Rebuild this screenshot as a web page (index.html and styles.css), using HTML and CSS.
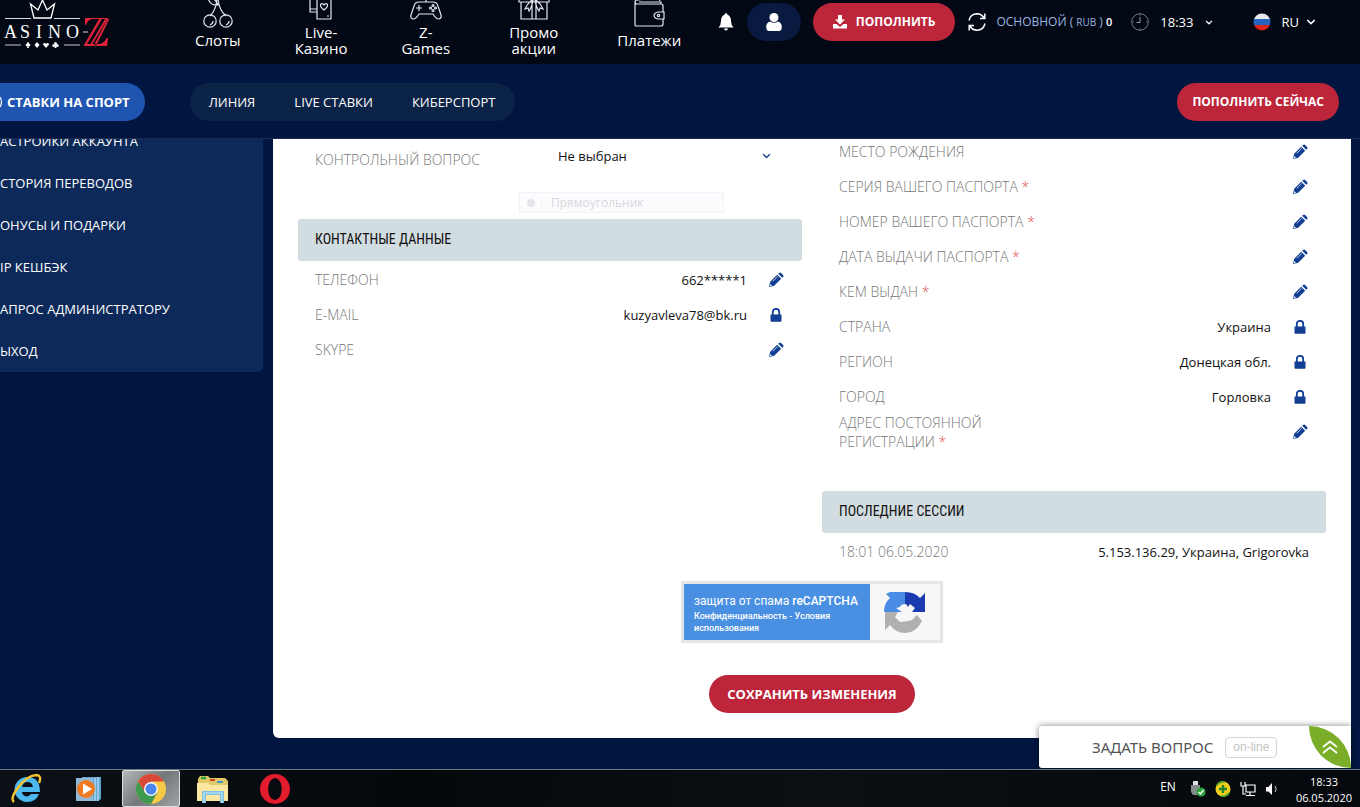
FILE: index.html
```html
<!DOCTYPE html>
<html lang="ru">
<head>
<meta charset="utf-8">
<title>Casino-Z</title>
<link rel="stylesheet" href="styles.css">
</head>
<body>
<svg class="defs" aria-hidden="true">
  <symbol id="pencil" viewBox="0 0 16 16"><path fill="currentColor" d="M1 15l1.200-5.200 7-7 4 4-7 7zM10.200 1.800l.9-.9q1-.9 2 0l2 2q.9 1 0 2l-.9.900z"/><path d="M4.800 9.300l5-5" stroke="#fff" stroke-width=".7"/><path d="M2.200 12l1.800 1.800-1.900.4z" fill="#fff"/></symbol>
  <symbol id="lock" viewBox="0 0 12 14"><path fill="currentColor" d="M.5 6.500h11V13q0 .8-.8.800H1.300q-.8 0-.8-.8z"/><path d="M2.800 7V4a3.200 3.200 0 0 1 6.400 0v3" fill="none" stroke="currentColor" stroke-width="1.800"/></symbol>
  <symbol id="chev" viewBox="0 0 10 6"><path d="M1.300 1L5 4.600 8.700 1" fill="none" stroke="currentColor" stroke-width="1.600"/></symbol>
</svg>

<header class="top">
  <a class="logo" href="#" aria-label="Casino-Z">
    <svg width="112" height="50" viewBox="0 0 112 50">
      <path d="M34 18L30.500 4l7.500 6 4.500-10L47 10l7.500-6L51 18z" fill="none" stroke="#fff" stroke-width="1.300"/>
      <path d="M5 18.500h26M54 18.500h26" stroke="#ddd" stroke-width="1"/>
      <path d="M5 45h16M64 45h16" stroke="#888" stroke-width="1.500"/>
      <text x="4 20 36 48 66" y="38" class="logo-word">ASINO</text>
      <path d="M83 32h5" stroke="#ddd"/>
      <g fill="#dc2338"><path d="M85 18h23L92 45h-2l15-26h-3L86.500 45H84L99 19h-6q-5 0-7 6h-1z"/><path d="M96.500 45L109 20l-1-2-14 27zM94 44h4q6 0 8.500-6h1.500l-1 8H84v-2z"/></g>
      <g fill="#fff"><path d="M28 41.500q1 2 2.500 3.500-.5 2-2 1l.5 2h-2l.5-2q-1.500 1-2-1 1.500-1.500 2.500-3.500zM37 42l2.500 3-2.500 3-2.500-3zM46 48l-3-3.500q0-2.500 3-1 3-1.500 3 1z"/><circle cx="55.500" cy="43.500" r="1.500"/><circle cx="53.800" cy="45.500" r="1.500"/><circle cx="57.200" cy="45.500" r="1.500"/><path d="M55.500 44l1 4h-2z"/></g>
    </svg>
  </a>
  <nav class="games">
    <a href="#"><svg width="32" height="32" viewBox="0 0 32 32"><g class="ln"><circle cx="8" cy="25" r="6.200"/><circle cx="24" cy="25" r="6.200"/><path d="M8 20q6-6 7-17M24 20q-7-6-8-17M16 9Q8 10 6 2q7-1 10 7zM8 29q3-1 3-4M24 29q3-1 3-4"/></g></svg>Слоты</a>
    <a href="#"><svg width="32" height="32" viewBox="0 0 32 32"><g class="ln"><path d="M12 3h14v28H12zM12 6L5 8v16h7M5 21h7M19 22q-5-4-3-6 2-1 3 1 1-2 3-1 2 2-3 6zM22 28h2M14 6h2"/></g></svg>Live-<br>Казино</a>
    <a href="#"><svg width="32" height="32" viewBox="0 0 32 32"><g class="ln"><path d="M9 14h14q4 0 5 4l3 9q1 3-2 4-3 0-6-5H9q-3 5-6 5-3-1-2-4l3-9q1-4 5-4zM16 14V8M9 17v6M6 20h6"/><circle cx="23" cy="17.500" r="1"/><circle cx="23" cy="22.500" r="1"/><circle cx="20.500" cy="20" r="1"/><circle cx="25.500" cy="20" r="1"/></g></svg>Z-<br>Games</a>
    <a href="#" class="wide"><svg width="32" height="32" viewBox="0 0 32 32"><g class="ln"><path d="M1 9h30v5H1zM3 14v17h26V14M14 9v22M18 9v22M14 12q-5 4-7 9l3-1 1 3q3-4 4-11M18 12q5 4 7 9l-3-1-1 3q-3-4-4-11M14 8q-5 0-6-5 5 0 8 5 3-5 8-5-1 5-6 5"/></g></svg>Промо<br>акции</a>
    <a href="#"><svg width="32" height="32" viewBox="0 0 32 32"><g class="ln"><path d="M2 6v23q0 1 1 1h25q2 0 2-2v-5M30 16v-6q0-2-2-2H4q-2 0-2-2 0-2 3-2l20-3 2 4M6 6h22v2M31 16h-6q-4 1-4 3.500t4 3.500h6z"/><circle cx="25.500" cy="19.500" r="1.200"/></g></svg>Платежи</a>
  </nav>
  <div class="tools">
    <button class="bell" aria-label="Уведомления"><svg width="16" height="18" viewBox="0 0 16 18"><path fill="#fff" d="M8 0q1.300 0 1.300 1.500Q13 3 13 8q0 4 2.500 6.500H.5Q3 12 3 8q0-5 3.700-6.500Q6.700 0 8 0zM6 15.500h4q-.3 2-2 2t-2-2z"/></svg></button>
    <button class="user" aria-label="Профиль"><svg width="16" height="18" viewBox="0 0 16 18"><circle cx="8" cy="4.500" r="4.500" fill="#fff"/><path fill="#fff" d="M4 8.500q4 2.500 8 0 3.800 1 3.800 5.500 0 4-3 4H3.200q-3 0-3-4Q.2 9.500 4 8.500z"/></svg></button>
    <button class="red deposit"><svg width="14" height="14" viewBox="0 0 14 14"><path fill="#fff" d="M5 0h4v4.500h3L7 9.500 2 4.500h3zM0 9h3.500L7 12l3.500-3H14v4.500H0z"/></svg>ПОПОЛНИТЬ</button>
    <svg class="refresh" width="20" height="20" viewBox="0 0 20 20"><path d="M2 8.500Q3.500 2 10 1.800q4.500 0 7 4.200M18 11.500Q16.500 18 10 18.200q-4.500 0-7-4.200M17.800 1.500V6.500H13M2.200 18.500v-5H7" fill="none" stroke="#fff" stroke-width="1.500"/></svg>
    <span class="balance">ОСНОВНОЙ ( <small>RUB</small> ) <b>0</b></span>
    <svg class="clock" width="18" height="18" viewBox="0 0 18 18"><circle cx="9" cy="9" r="8.300" fill="none" stroke="#777c86"/><path d="M9 4v5.500H5.500" fill="none" stroke="#9a9ea6"/><path d="M9 1.500v1M9 15.500v1M1.500 9h1M15.500 9h1" stroke="#9a9ea6"/></svg>
    <button class="time">18:33<svg width="8" height="5"><use href="#chev"/></svg></button>
    <button class="lang"><svg class="flag" width="18" height="18" viewBox="0 0 18 18"><defs><clipPath id="fc"><circle cx="9" cy="9" r="8.500"/></clipPath></defs><g clip-path="url(#fc)"><path fill="#e8eaee" d="M0 0h18v6H0z"/><path fill="#2465c0" d="M0 6h18v6H0z"/><path fill="#dc2418" d="M0 12h18v6H0z"/></g></svg>RU<svg width="10" height="6"><use href="#chev"/></svg></button>
  </div>
</header>

<div class="subnav">
  <a class="sport" href="#"><svg width="3" height="12" viewBox="0 0 3 12"><path d="M0 1q3 5 0 10" fill="none" stroke="#fff" stroke-width="1.200"/></svg>СТАВКИ НА СПОРТ</a>
  <nav class="pills"><a href="#">ЛИНИЯ</a><a href="#">LIVE СТАВКИ</a><a href="#">КИБЕРСПОРТ</a></nav>
  <button class="red now">ПОПОЛНИТЬ СЕЙЧАС</button>
</div>

<main class="main">
  <aside class="side">
    <a href="#">АСТРОЙКИ АККАУНТА</a><a href="#">СТОРИЯ ПЕРЕВОДОВ</a><a href="#">ОНУСЫ И ПОДАРКИ</a><a href="#">IP КЕШБЭК</a><a href="#">АПРОС АДМИНИСТРАТОРУ</a><a href="#">ЫХОД</a>
  </aside>
  <form class="panel">
    <div class="cols">
      <section>
        <div class="question"><label for="q">КОНТРОЛЬНЫЙ ВОПРОС</label><div class="pick"><select id="q"><option>Не выбран</option></select><svg width="9" height="6"><use href="#chev"/></svg></div></div>
        <div class="ghost"><i></i><span>Прямоугольник</span></div>
        <h2>КОНТАКТНЫЕ ДАННЫЕ</h2>
        <div class="row"><span class="lb">ТЕЛЕФОН</span><span class="val">662*****1</span><button type="button" aria-label="Изменить"><svg width="16" height="16"><use href="#pencil"/></svg></button></div>
        <div class="row"><span class="lb">E-MAIL</span><span class="val">kuzyavleva78@bk.ru</span><span class="ic"><svg width="12" height="14"><use href="#lock"/></svg></span></div>
        <div class="row"><span class="lb">SKYPE</span><button type="button" aria-label="Изменить"><svg width="16" height="16"><use href="#pencil"/></svg></button></div>
      </section>
      <section>
        <div class="passport">
        <div class="row"><span class="lb">МЕСТО РОЖДЕНИЯ</span><button type="button" aria-label="Изменить"><svg width="16" height="16"><use href="#pencil"/></svg></button></div>
        <div class="row"><span class="lb">СЕРИЯ ВАШЕГО ПАСПОРТА <em>*</em></span><button type="button" aria-label="Изменить"><svg width="16" height="16"><use href="#pencil"/></svg></button></div>
        <div class="row"><span class="lb">НОМЕР ВАШЕГО ПАСПОРТА <em>*</em></span><button type="button" aria-label="Изменить"><svg width="16" height="16"><use href="#pencil"/></svg></button></div>
        <div class="row"><span class="lb">ДАТА ВЫДАЧИ ПАСПОРТА <em>*</em></span><button type="button" aria-label="Изменить"><svg width="16" height="16"><use href="#pencil"/></svg></button></div>
        <div class="row"><span class="lb">КЕМ ВЫДАН <em>*</em></span><button type="button" aria-label="Изменить"><svg width="16" height="16"><use href="#pencil"/></svg></button></div>
        <div class="row"><span class="lb">СТРАНА</span><span class="val">Украина</span><span class="ic"><svg width="12" height="14"><use href="#lock"/></svg></span></div>
        <div class="row"><span class="lb">РЕГИОН</span><span class="val">Донецкая обл.</span><span class="ic"><svg width="12" height="14"><use href="#lock"/></svg></span></div>
        <div class="row"><span class="lb">ГОРОД</span><span class="val">Горловка</span><span class="ic"><svg width="12" height="14"><use href="#lock"/></svg></span></div>
        <div class="row"><span class="lb">АДРЕС ПОСТОЯННОЙ<br>РЕГИСТРАЦИИ <em>*</em></span><button type="button" aria-label="Изменить"><svg width="16" height="16"><use href="#pencil"/></svg></button></div>
        </div>
        <h2>ПОСЛЕДНИЕ СЕССИИ</h2>
        <div class="row session"><span class="lb">18:01 06.05.2020</span><span class="val">5.153.136.29, Украина, Grigorovka</span></div>
      </section>
    </div>
    <div class="captcha">
      <div class="cap-text"><p>защита от спама <b>reCAPTCHA</b></p><small><a href="#">Конфиденциальность</a> - <a href="#">Условия использования</a></small></div>
      <div class="cap-logo"><svg width="42" height="42" viewBox="0 0 42 42"><path fill="#4a8de6" d="M0 21Q0 12 6 7L2 3 6 1h15v12q-4 0-5 3l-4 1 6 4z"/><path fill="#1c3aaf" d="M21 1q10 0 15 6l5-5v19H28l3-4-5-4-2 3q-1-3-3-3z"/><path fill="#b0b0b0" d="M1 21h13l-3 5 5 5 8-1 4-1 5-5 5 6q-6 12-17 12-9 0-15-8l-5 5z"/></svg></div>
    </div>
    <button type="button" class="red save">СОХРАНИТЬ ИЗМЕНЕНИЯ</button>
  </form>
  <div class="chat"><span class="ask">ЗАДАТЬ ВОПРОС</span><span class="online">on-line</span><button type="button" class="leaf" aria-label="Развернуть"><svg width="16" height="14" viewBox="0 0 16 14"><path d="M1 7l7-5.500L15 7M1 13l7-5.500L15 13" fill="none" stroke="#fff" stroke-width="1.800"/></svg></button></div>
</main>

<footer class="taskbar">
  <div class="apps">
    <button aria-label="Internet Explorer"><svg width="34" height="32" viewBox="0 0 34 32"><path d="M17 4a12.500 12.500 0 0 0 0 25q9 0 12-8h-8q-3 4-7 1.500-2-1-2-3.500h18Q30 4 17 4zm-5 10q1-5 5.500-5t5.500 5z" fill="#4db8ee"/><path d="M4 29q-4-3 3-13Q17 2 27 2q5 1 2 8" fill="none" stroke="#f3c52e" stroke-width="2.400"/></svg></button>
    <button aria-label="Media Player"><svg width="28" height="28" viewBox="0 0 28 28"><path fill="#5fa5cf" d="M7 2h19v22l-3 2H7z"/><path d="M20 3v23M23 2v24" stroke="#d4efff"/><path fill="#8fb9d5" d="M1 3h17v23H1z"/><circle cx="11" cy="14" r="9" fill="#ef7a22"/><path d="M8 8.500l9 5.500-9 5.500z" fill="#fff"/></svg></button>
    <button class="active" aria-label="Chrome"><svg width="30" height="30" viewBox="0 0 30 30"><circle cx="15" cy="15" r="15" fill="#f6c945"/><path fill="#d9493a" d="M2 7.500A15 15 0 0 1 28 7.500H15L8 17z"/><path fill="#3e9a50" d="M2 7.500A15 15 0 0 0 15 30l6.500-11.500H9z"/><circle cx="15" cy="15" r="7" fill="#f4f4f4"/><circle cx="15" cy="15" r="5.500" fill="#4886ee"/></svg></button>
    <button aria-label="Проводник"><svg width="34" height="32" viewBox="0 0 34 32"><path fill="#e3c86a" d="M2 6l2-3h8l2 2h15l3 3v19H2z"/><path fill="#fbe7a2" d="M1 10h11l2 2h18v16H1z"/><path d="M5 5h5" stroke="#2ea43c" stroke-width="2.500"/><path d="M14 7h5" stroke="#c8432c" stroke-width="2"/><path d="M21 9h6" stroke="#3a9ad6" stroke-width="2"/><path d="M8 30V20h18v10" fill="none" stroke="#7cc0e2" stroke-width="4"/><path d="M8 30V20h18v10" fill="none" stroke="#c9ecf9" stroke-width="1"/></svg></button>
    <button aria-label="Opera"><svg width="30" height="32" viewBox="0 0 30 32"><path fill-rule="evenodd" fill="#e21b2d" d="M15 1a15 15 0 0 1 0 30 15 15 0 0 1 0-30zm0 4c-9 1-9 21 0 22 9-1 9-21 0-22z"/></svg></button>
  </div>
  <div class="tray">
    <span class="en">EN</span>
    <svg width="16" height="18" viewBox="0 0 16 18"><path fill="#ddd" d="M3 1h5v4H3z"/><path fill="#858a8e" d="M1 5h9v7l-2 3H3l-2-3z"/><circle cx="11" cy="12" r="4.600" fill="#27a336"/><path d="M8.500 12l2 2 3-4" fill="none" stroke="#fff" stroke-width="1.400"/></svg>
    <svg width="16" height="16" viewBox="0 0 16 16"><circle cx="8" cy="8" r="7.500" fill="#f0cf20"/><path d="M2 4Q5 0 10 1M14 12q-3 4-8 3" stroke="#58a52c" stroke-width="2" fill="none"/><path d="M8 4v8M4 8h8" stroke="#23852d" stroke-width="2.400"/></svg>
    <svg width="16" height="16" viewBox="0 0 16 16"><path d="M1 1v4h4V1M3 5v8h3M6 4h9v7H6zM10 11v3M6 14.500h9" fill="none" stroke="#fff" stroke-width="1.200"/></svg>
    <svg width="14" height="14" viewBox="0 0 14 14"><path fill="#fff" d="M1 5h2.500L7 1v12L3.500 9.500H1z"/><path d="M10 4q2.500 3 0 6" fill="none" stroke="#ccc"/></svg>
    <div class="date"><span>18:33</span><span>06.05.2020</span></div>
  </div>
</footer>
</body>
</html>
```
FILE: styles.css
```css
* { box-sizing: border-box; }
body { margin: 0; min-height: 100vh; display: flex; flex-direction: column; background: #001640; color: #fff; font: 13px/18px "Open Sans", "Noto Sans", sans-serif; }
a { color: inherit; text-decoration: none; }
button { border: 0; padding: 0; background: none; color: inherit; font: inherit; display: flex; align-items: center; justify-content: center; cursor: pointer; }
svg { display: block; flex: none; }
.defs { display: none; }

.top { height: 64px; display: flex; background: #020814; overflow: hidden; }
.logo-word { font: 18px "Liberation Serif", serif; fill: #fff; }
.games { display: flex; align-items: center; gap: 54px; height: 44px; margin-left: 83px; font-size: 15px; line-height: 16px; text-align: center; }
.games a { display: flex; flex-direction: column; align-items: center; }
.games a svg { margin-bottom: 4px; }
.games .wide { padding: 0 5px; }
.ln { fill: none; stroke: #e4e8ee; stroke-width: 1.2; }
.tools { display: flex; align-items: center; height: 44px; margin-left: auto; padding-right: 44px; }
.user { width: 54px; height: 38px; border-radius: 19px; background: #081a40; margin: 0 12px 0 13px; }
.red { height: 38px; border-radius: 19px; background: #bd253a; color: #fff; font-weight: 700; white-space: nowrap; }
.deposit { padding: 0 20px; gap: 9px; font-size: 12px; margin-right: 12px; }
.balance { color: #9bb4e0; font-size: 12px; margin: 0 19px 0 9px; white-space: nowrap; }
.balance small { font-size: 10px; }
.balance b { color: #fff; font-weight: 600; font-size: 11px; }
.time { gap: 12px; font-weight: 500; margin: 0 40px 0 11px; }
.lang { gap: 7px; }
.flag { margin-right: 3px; }

.subnav { height: 75px; display: flex; align-items: center; border-bottom: 1px solid #1c2c50; padding: 2px 21px 0 0; }
.sport { height: 38px; display: flex; align-items: center; gap: 4px; padding-right: 15px; border-radius: 0 19px 19px 0; background: #1f55b0; font-weight: 700; white-space: nowrap; }
.pills { display: flex; align-items: center; gap: 39px; height: 38px; padding: 0 20px 0 19px; margin-left: 45px; border-radius: 19px; background: #0c2348; font-weight: 500; white-space: nowrap; }
.now { margin-left: auto; padding: 0 15px; font-size: 12px; }

.main { flex: 1; display: flex; align-items: flex-start; gap: 10px; padding: 0 9px 31px 0; position: relative; overflow: hidden; }
.side { width: 263px; flex: none; margin-top: -19px; background: #0d2959; border-radius: 0 0 6px 0; }
.side a { display: block; line-height: 42px; white-space: nowrap; }
.panel { flex: 1; background: #fff; border-radius: 0 0 6px 6px; padding: 0 25px 25px; color: #111; display: flex; flex-direction: column; align-items: center; }
.cols { width: 100%; display: grid; grid-template-columns: 1fr 1fr; gap: 20px; }
h2 { margin: 0 0 1px; padding: 0 17px 2px; border-radius: 3px; background: #d2dde2; color: #111; font: 14px/40px "Roboto Condensed", "Open Sans Condensed", "Liberation Sans Narrow", "Roboto", sans-serif; }
.question { display: flex; justify-content: space-between; padding: 0 31px 0 17px; height: 53px; }
.question label, .lb { color: #777; font-size: 14px; line-height: 19px; font-weight: 300; }
.question label { padding-top: 11px; }
.pick { position: relative; width: 213px; height: 34px; color: #1a439b; }
.pick select { appearance: none; width: 100%; height: 34px; border: 0; background: none; color: #111; font: inherit; padding: 0; }
.pick svg { position: absolute; right: 0; top: 14px; }
.ghost { display: flex; align-items: center; width: 205px; height: 21px; margin: 0 0 6px 221px; border: 1px solid #f3f3f7; background: #fcfcfe; color: #d8d8dc; font-size: 12px; }
.ghost i { width: 8px; height: 8px; border-radius: 50%; background: #e4e4ea; margin: 0 6px 0 7px; }
.ghost span { border-left: 1px solid #f5f5f8; padding-left: 9px; }
.row { display: flex; align-items: center; height: 35px; padding: 0 17px; }
.lb { margin-right: auto; }
.lb em { font-style: normal; color: #e24b4b; }
.row button, .ic { width: 18px; display: flex; justify-content: center; margin-left: 20px; color: #123f93; }
.passport { margin: -5px 0 42px; }
.captcha { display: flex; width: 262px; height: 62px; margin-top: 12px; border: 3px solid #e3e5e8; background: #f7f7f7; font-family: Roboto, sans-serif; color: #fff; }
.cap-text { width: 186px; background: #4a90e2; padding: 9px 0 0 10px; }
.cap-text p { margin: 0; font-size: 12px; line-height: 17px; white-space: nowrap; }
.cap-text b { font-weight: 500; }
.cap-text small { display: block; font-size: 9px; line-height: 12px; font-weight: 500; }
.cap-logo { flex: 1; display: flex; align-items: center; justify-content: center; }
.save { margin-top: 32px; padding: 0 18px; }
.chat { position: absolute; right: 9px; bottom: 1px; width: 312px; height: 42px; display: flex; align-items: center; gap: 12px; padding-left: 53px; background: #fff; border-radius: 3px 0 0 3px; box-shadow: 0 0 6px rgba(0, 0, 0, .5); color: #555; font-family: "Noto Sans", sans-serif; }
.ask { font-size: 15px; white-space: nowrap; }
.online { border: 1px solid #d4d4d4; border-radius: 4px; padding: 0 7px; color: #c4c4c4; font: 12px/19px "Liberation Sans", sans-serif; }
.leaf { width: 42px; height: 42px; margin-left: auto; background: #7aad28; border-radius: 0 42px 0 42px; }

.taskbar { height: 38px; display: flex; justify-content: space-between; border-top: 1px solid #6f7882; background: linear-gradient(90deg, #0c1117, #05080b 30%, #0b1014 60%, #05080c); overflow: hidden; }
.apps { display: flex; gap: 4px; margin-left: -2px; }
.apps button { width: 58px; height: 37px; }
.apps .active { border: 1px solid #ddd; border-radius: 2px; background: linear-gradient(135deg, #b5b8ba, #747779 50%, #a0a3a5); }
.tray { display: flex; align-items: center; gap: 9px; padding-right: 8px; font-size: 12px; }
.en { margin-right: 5px; padding-bottom: 4px; }
.date { display: flex; flex-direction: column; align-items: center; font-size: 11px; line-height: 16px; margin-left: 8px; padding-top: 2px; }
```
